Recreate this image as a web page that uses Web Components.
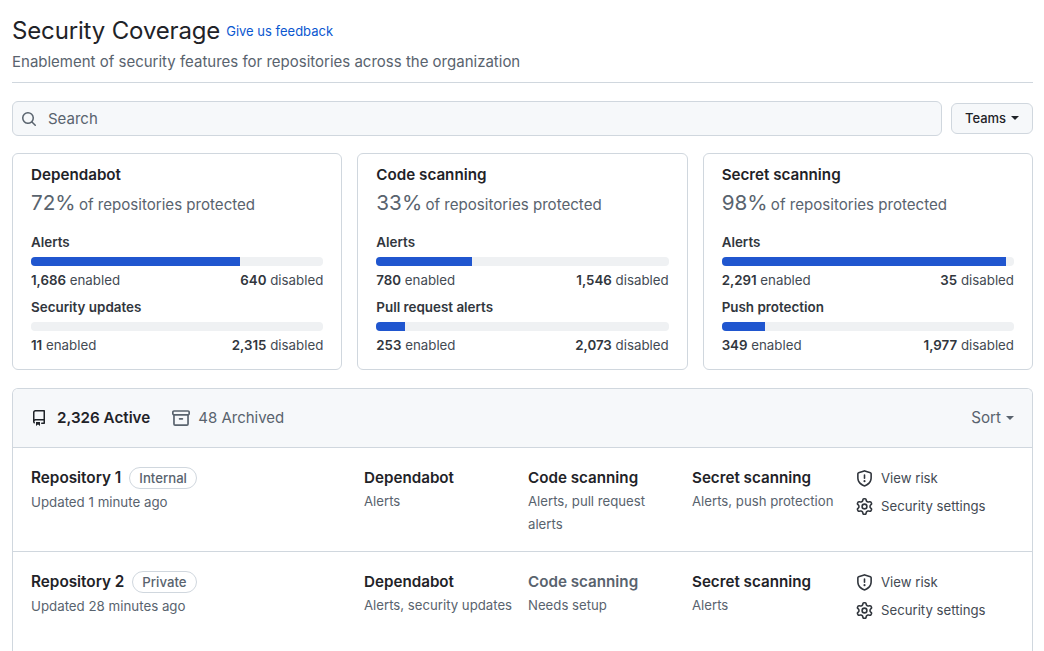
<!DOCTYPE html>
<html lang="en"><head><meta charset="utf-8"><title>Security Coverage</title>
<style>
html,body{margin:0;padding:0;background:#fff;overflow:hidden;height:651px}
body{font-family:Inter,"Liberation Sans",sans-serif;color:#1f2328;-webkit-font-smoothing:antialiased}
</style></head><body>
<coverage-app></coverage-app>
<script>
const P={
search:'M10.68 11.74a6 6 0 0 1-7.922-8.982 6 6 0 0 1 8.982 7.922l3.04 3.04a.749.749 0 0 1-.326 1.275.749.749 0 0 1-.734-.215ZM11.5 7a4.499 4.499 0 1 0-8.997 0A4.499 4.499 0 0 0 11.5 7Z',
repo:'M2 2.5A2.5 2.5 0 0 1 4.5 0h8.75a.75.75 0 0 1 .75.75v12.5a.75.75 0 0 1-.75.75h-2.5a.75.75 0 0 1 0-1.5h1.75v-2h-8a1 1 0 0 0-.714 1.7.75.75 0 1 1-1.072 1.05A2.495 2.495 0 0 1 2 11.5Zm10.5-1h-8a1 1 0 0 0-1 1v6.708A2.486 2.486 0 0 1 4.5 9h8ZM5 12.25a.25.25 0 0 1 .25-.25h3.5a.25.25 0 0 1 .25.25v3.25a.25.25 0 0 1-.4.2l-1.45-1.087a.249.249 0 0 0-.3 0L5.4 15.7a.25.25 0 0 1-.4-.2Z',
archive:'M0 2.75C0 1.784.784 1 1.75 1h12.5c.966 0 1.75.784 1.75 1.75v1.5A1.75 1.75 0 0 1 15 5.72v7.53A1.75 1.75 0 0 1 13.25 15H2.75A1.75 1.75 0 0 1 1 13.25V5.72A1.75 1.75 0 0 1 0 4.25Zm1.75-.25a.25.25 0 0 0-.25.25v1.5c0 .138.112.25.25.25h12.5a.25.25 0 0 0 .25-.25v-1.5a.25.25 0 0 0-.25-.25ZM2.5 6v7.25c0 .138.112.25.25.25h10.5a.25.25 0 0 0 .25-.25V6ZM6 8.75A.75.75 0 0 1 6.75 8h2.5a.75.75 0 0 1 0 1.5h-2.5A.75.75 0 0 1 6 8.75Z',
shield:'M7.467.133a1.748 1.748 0 0 1 1.066 0l5.25 1.68A1.75 1.75 0 0 1 15 3.48V7c0 1.566-.32 3.182-1.303 4.682-.983 1.498-2.585 2.813-5.032 3.855a1.697 1.697 0 0 1-1.33 0c-2.447-1.042-4.049-2.357-5.032-3.855C1.32 10.182 1 8.566 1 7V3.48a1.75 1.75 0 0 1 1.217-1.667Zm.61 1.429a.25.25 0 0 0-.153 0l-5.25 1.68a.25.25 0 0 0-.174.238V7c0 1.358.275 2.666 1.057 3.86.784 1.194 2.121 2.34 4.366 3.297a.196.196 0 0 0 .154 0c2.245-.956 3.582-2.104 4.366-3.298C13.225 9.666 13.5 8.36 13.5 7V3.48a.251.251 0 0 0-.174-.237l-5.25-1.68ZM8.75 4.75v3a.75.75 0 0 1-1.5 0v-3a.75.75 0 0 1 1.5 0ZM9 10.5a1 1 0 1 1-2 0 1 1 0 0 1 2 0Z',
gear:'M8 0a8.2 8.2 0 0 1 .701.031C9.444.095 9.99.645 10.16 1.29l.288 1.107c.018.066.079.158.212.224.231.114.454.243.668.386.123.082.233.09.299.071l1.103-.303c.644-.176 1.392.021 1.82.63.27.385.506.792.704 1.218.315.675.111 1.422-.364 1.891l-.814.806c-.049.048-.098.147-.088.294.016.257.016.515 0 .772-.01.147.038.246.088.294l.814.806c.475.469.679 1.216.364 1.891a7.977 7.977 0 0 1-.704 1.217c-.428.61-1.176.807-1.82.63l-1.102-.302c-.067-.019-.177-.011-.3.071a5.909 5.909 0 0 1-.668.386c-.133.066-.194.158-.211.224l-.29 1.106c-.168.646-.715 1.196-1.458 1.26a8.006 8.006 0 0 1-1.402 0c-.743-.064-1.289-.614-1.458-1.26l-.289-1.106c-.018-.066-.079-.158-.212-.224a5.738 5.738 0 0 1-.668-.386c-.123-.082-.233-.09-.299-.071l-1.103.303c-.644.176-1.392-.021-1.82-.63a8.12 8.12 0 0 1-.704-1.218c-.315-.675-.111-1.422.363-1.891l.815-.806c.05-.048.098-.147.088-.294a6.214 6.214 0 0 1 0-.772c.01-.147-.038-.246-.088-.294l-.815-.806C.635 6.045.431 5.298.746 4.623a7.92 7.92 0 0 1 .704-1.217c.428-.61 1.176-.807 1.82-.63l1.102.302c.067.019.177.011.3-.071.214-.143.437-.272.668-.386.133-.066.194-.158.211-.224l.29-1.106C6.009.645 6.556.095 7.299.03 7.53.01 7.764 0 8 0Zm-.571 1.525c-.036.003-.108.036-.137.146l-.289 1.105c-.147.561-.549.967-.998 1.189-.173.086-.34.183-.5.29-.417.278-.97.423-1.529.27l-1.103-.303c-.109-.03-.175.016-.195.045-.22.312-.412.644-.573.99-.014.031-.021.11.059.19l.815.806c.411.406.562.957.53 1.456a4.709 4.709 0 0 0 0 .582c.032.499-.119 1.05-.53 1.456l-.815.806c-.081.08-.073.159-.059.19.162.346.353.677.573.989.02.03.085.076.195.046l1.102-.303c.56-.153 1.113-.008 1.53.27.161.107.328.204.501.29.447.222.85.629.997 1.189l.289 1.105c.029.109.101.143.137.146a6.6 6.6 0 0 0 1.142 0c.036-.003.108-.036.137-.146l.289-1.105c.147-.561.549-.967.998-1.189.173-.086.34-.183.5-.29.417-.278.97-.423 1.529-.27l1.103.303c.109.029.175-.016.195-.045.22-.313.411-.644.573-.99.014-.031.021-.11-.059-.19l-.815-.806c-.411-.406-.562-.957-.53-1.456a4.709 4.709 0 0 0 0-.582c-.032-.499.119-1.05.53-1.456l.815-.806c.081-.08.073-.159.059-.19a6.464 6.464 0 0 0-.573-.989c-.02-.03-.085-.076-.195-.046l-1.102.303c-.56.153-1.113.008-1.53-.27a4.44 4.44 0 0 0-.501-.29c-.447-.222-.85-.629-.997-1.189l-.289-1.105c-.029-.11-.101-.143-.137-.146a6.6 6.6 0 0 0-1.142 0ZM11 8a3 3 0 1 1-6 0 3 3 0 0 1 6 0ZM9.5 8a1.5 1.5 0 1 0-3.001.001A1.5 1.5 0 0 0 9.5 8Z'
};
const caret='<svg width="8" height="4" viewBox="0 0 8 4" style="display:block" aria-hidden="true"><path d="M0 0h8L4 4Z" fill="currentColor"/></svg>';
const ico=(n,s,c)=>`<svg width="${s}" height="${s}" viewBox="0 0 16 16" style="display:block;flex:none" fill="${c}" aria-hidden="true"><path d="${P[n]}"/></svg>`;
class Base extends HTMLElement{
  render(css,html){const r=this.shadowRoot||this.attachShadow({mode:'open'});r.innerHTML=`<style>${css}</style>${html}`;}
}
class StatBar extends Base{
  connectedCallback(){
    const g=n=>this.getAttribute(n);
    this.render(`:host{display:block}
    .l{font-size:13.4px;font-weight:600;line-height:16px;color:#31363d}
    .t{height:8.5px;margin-top:7px;background:#eff1f3;border-radius:4px;overflow:hidden}
    .f{height:100%;background:#2056cf}
    .n{display:flex;justify-content:space-between;font-size:13.3px;line-height:16px;margin-top:6px;color:#434a53}
    b{font-weight:600;color:#31363d}`,
    `<div class="l">${g('label')}</div><div class="t"><div class="f" style="width:${g('pct')}%"></div></div>
     <div class="n"><span><b>${g('on')}</b> enabled</span><span><b>${g('off')}</b> disabled</span></div>`);
  }
}
class CoverageCard extends Base{
  connectedCallback(){
    const g=n=>this.getAttribute(n);
    this.render(`:host{display:block;box-sizing:border-box;height:217px;border:1px solid #d0d7de;border-radius:6px;padding:12px 18px 0}
    h3{margin:0;font-size:15.2px;font-weight:600;line-height:18px;color:#1f2328}
    .p{margin-top:5px;line-height:28px;font-size:15.1px;color:#59636e;white-space:nowrap;height:28px}
    .p span{font-size:20.7px;color:#59636e;margin-right:-1px}
    .s{display:flex;flex-direction:column;margin-top:17px;gap:11.5px}`,
    `<h3>${g('name')}</h3><div class="p"><span>${g('pct')}%</span> of repositories protected</div><div class="s"><slot></slot></div>`);
  }
}
class RepoRow extends Base{
  connectedCallback(){
    const g=n=>this.getAttribute(n);
    const col=(t,d,m)=>`<div class="c"><div class="h${m?' m':''}">${t}</div><div class="d">${d}</div></div>`;
    this.render(`:host{display:grid;grid-template-columns:333px 164px 164px 164px 1fr;box-sizing:border-box;padding:18px 18px 0;border-top:1px solid #d0d7de;height:${g('h')}px}
    .n{display:flex;align-items:center;height:23px;margin-bottom:1px;gap:8px;font-size:15.3px;font-weight:600;color:#1f2328}
    .b{font-size:13.2px;font-weight:500;color:#59636e;border:1px solid #d0d7de;border-radius:11px;padding:0 9px;line-height:20px}
    .u{font-size:13.3px;line-height:24px;color:#59636e}
    .h{font-size:15.2px;font-weight:600;line-height:24px;color:#1f2328}
    .h.m{color:#59636e}
    .d{font-size:13.2px;line-height:23px;color:#59636e;padding-right:14px}
    .a{display:flex;flex-direction:column}
    .i{display:flex;align-items:center;gap:8px;font-size:13.2px;height:24px;color:#434a53;margin-bottom:4px}
    `,`<div><div class="n">${g('name')}<span class="b">${g('vis')}</span></div><div class="u">${g('upd')}</div></div>
    ${col('Dependabot',g('dep'))}${col('Code scanning',g('code'),this.hasAttribute('muted'))}${col('Secret scanning',g('sec'))}
    <div class="a"><div class="i">${ico('shield',17,'#31363d')}View risk</div><div class="i">${ico('gear',17,'#31363d')}Security settings</div></div>`);
  }
}
class CoverageApp extends Base{
  connectedCallback(){
    this.render(`:host{display:block;width:1021px;margin-left:12px;padding-top:16px}
    header{height:67px;border-bottom:1px solid #d0d7de;box-sizing:border-box}
    .tt{display:flex;align-items:center;gap:6px;height:29px;line-height:29px}
    h1{margin:0;font-size:24px;font-weight:400;color:#1f2328;letter-spacing:-.15px}
    a{font-size:13px;line-height:32px;color:#0b57d0;text-decoration:none}
    .sub{font-size:15px;line-height:20px;color:#59636e;margin-top:7px}
    .bar{display:flex;align-items:center;gap:9px;margin-top:18px;height:35px}
    .q{flex:1;box-sizing:border-box;height:35px;background:#f6f8fa;border:1px solid #d0d7de;border-radius:6px;display:flex;align-items:center;gap:11px;padding:0 8px;font-size:15px;color:#59636e}
    .btn{box-sizing:border-box;height:31px;width:82px;padding-bottom:1px;display:flex;align-items:center;justify-content:center;gap:5px;background:#f6f8fa;border:1px solid #d0d7de;border-radius:6px;font-size:13px;font-weight:500;color:#1f2328}
    .cards{display:grid;grid-template-columns:repeat(3,1fr);gap:15px;margin-top:17px}
    .list{margin-top:18px;border:1px solid #d0d7de;border-bottom:0;border-radius:6px 6px 0 0;overflow:hidden}
    .lh{box-sizing:border-box;height:58px;background:#f6f8fa;display:flex;align-items:center;padding:0 18px 1px;font-size:15px}
    .tab{display:flex;align-items:center;gap:8px;margin-right:22px;color:#59636e}
    .tab.on{color:#1f2328;font-weight:600;font-size:15.2px;gap:10px}
    .sort{margin-left:auto;display:flex;align-items:center;gap:5px;color:#59636e;font-size:15.2px}`,
    `<header><div class="tt"><h1>Security Coverage</h1><a href="#">Give us feedback</a></div><div class="sub">Enablement of security features for repositories across the organization</div></header>
    <div class="bar"><div class="q">${ico('search',16,'#59636e')}<span>Search</span></div><div class="btn">Teams ${caret}</div></div>
    <div class="cards">
      <coverage-card name="Dependabot" pct="72"><stat-bar label="Alerts" pct="71.6" on="1,686" off="640"></stat-bar><stat-bar label="Security updates" pct="0" on="11" off="2,315"></stat-bar></coverage-card>
      <coverage-card name="Code scanning" pct="33"><stat-bar label="Alerts" pct="32.7" on="780" off="1,546"></stat-bar><stat-bar label="Pull request alerts" pct="9.8" on="253" off="2,073"></stat-bar></coverage-card>
      <coverage-card name="Secret scanning" pct="98"><stat-bar label="Alerts" pct="97.3" on="2,291" off="35"></stat-bar><stat-bar label="Push protection" pct="14.7" on="349" off="1,977"></stat-bar></coverage-card>
    </div>
    <div class="list">
      <div class="lh"><div class="tab on">${ico('repo',16,'#1f2328')}2,326 Active</div><div class="tab">${ico('archive',18,'#59636e')}48 Archived</div><div class="sort">Sort ${caret}</div></div>
      <repo-row h="104" name="Repository 1" vis="Internal" upd="Updated 1 minute ago" dep="Alerts" code="Alerts, pull request alerts" sec="Alerts, push protection"></repo-row>
      <repo-row h="86" name="Repository 2" vis="Private" upd="Updated 28 minutes ago" dep="Alerts, security updates" code="Needs setup" sec="Alerts" muted></repo-row>
      <repo-row h="40" name="" vis="" upd="" dep="" code="" sec="" style="visibility:hidden"></repo-row>
    </div>`);
  }
}
customElements.define('stat-bar',StatBar);
customElements.define('coverage-card',CoverageCard);
customElements.define('repo-row',RepoRow);
customElements.define('coverage-app',CoverageApp);
</script>
</body></html>
